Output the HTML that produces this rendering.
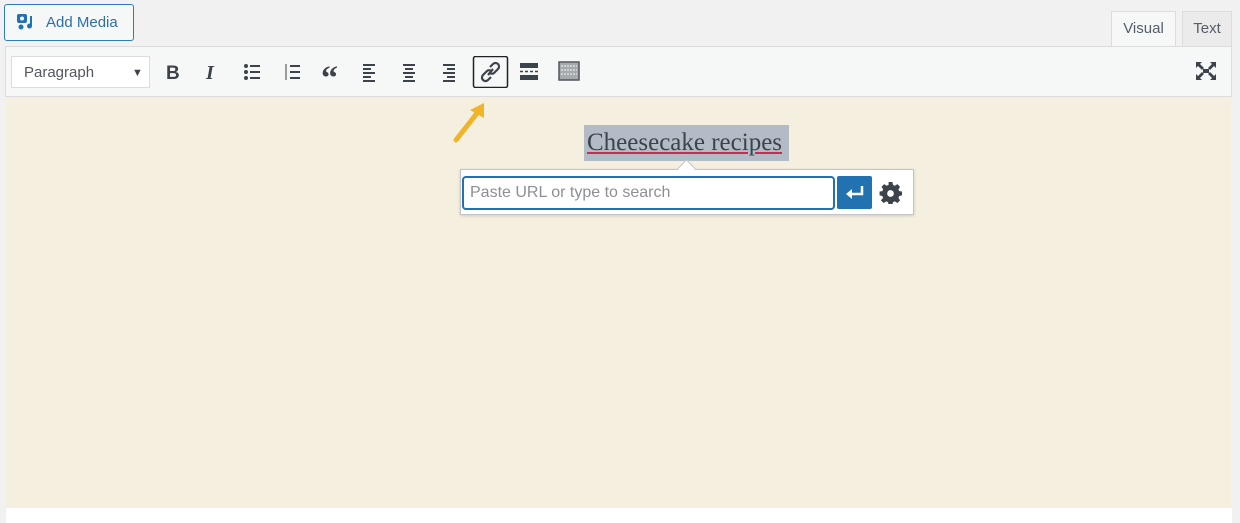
<!DOCTYPE html>
<html><head><meta charset="utf-8"><style>
body{margin:0;width:1240px;height:523px;background:#f1f1f1;font-family:"Liberation Sans",sans-serif;position:relative;overflow:hidden}
.abs{position:absolute}
.btn{left:4px;top:4px;width:130px;height:37px;border:1px solid #2e7bc0;border-radius:3px;background:#f6f7f7;box-sizing:border-box;color:#2e6fa8;font-size:15px}
.tab{top:11px;height:36px;border:1px solid #dcdcde;border-bottom:none;box-sizing:border-box;font-size:15px;color:#555d66;text-align:center;line-height:34px}
.tb{left:5px;top:46px;width:1227px;height:51px;background:#f6f7f7;border:1px solid #dcdcde;box-sizing:border-box}
</style></head><body>
<div class="abs btn"><svg class="abs" style="left:11px;top:8px" width="22" height="18" viewBox="0 0 22 18"><rect x="1" y="1" width="10" height="9" rx="2" fill="#2271b1"/><circle cx="6" cy="5.5" r="2" fill="#f6f7f7"/><path d="M13 3h3v10a2.5 2.5 0 1 1-2-2.4V3z" fill="#2271b1"/><circle cx="5" cy="14" r="2.5" fill="#2271b1"/></svg><span class="abs" style="left:41px;top:9px">Add Media</span></div>
<div class="abs tab" style="left:1111px;width:65px;background:#f6f7f7;height:37px">Visual</div>
<div class="abs tab" style="left:1182px;width:50px;background:#ebebeb">Text</div>
<div class="abs tb"></div>
<div class="abs" style="left:11px;top:56px;width:139px;height:32px;background:#fff;border:1px solid #dcdcde;box-sizing:border-box;font-size:15px;color:#50575e;line-height:31px;padding-left:12px">Paragraph<span class="abs" style="left:120px;top:1px;font-size:11px;color:#3c434a">▼</span></div>
<svg class="abs" style="left:160px;top:56px" width="440" height="32" viewBox="0 0 440 32" fill="#3c434a" stroke="#3c434a">
<text x="6" y="23" font-size="19" font-weight="bold" stroke="none" font-family="Liberation Sans">B</text>
<text x="46" y="23" font-size="20" font-style="italic" font-weight="bold" stroke="none" font-family="Liberation Serif">I</text>
<g stroke-width="2"><path d="M90 10h10M90 16h10M90 22h10"/><circle cx="86" cy="10" r="1"/><circle cx="86" cy="16" r="1"/><circle cx="86" cy="22" r="1"/>
<path d="M130 10h10M130 16h10M130 22h10" /><path d="M126 8v16" stroke-width="1"/></g>
<text x="161" y="33" font-size="34" font-weight="bold" stroke="none" font-family="Liberation Serif">“</text>
<g stroke-width="2"><path d="M203 9h12M203 13h8M203 17h12M203 21h8M203 25h12"/>
<path d="M243 9h12M245 13h8M243 17h12M245 21h8M243 25h12"/>
<path d="M283 9h12M287 13h8M283 17h12M287 21h8M283 25h12"/></g>
<rect x="313.5" y="0.5" width="34" height="31" rx="2" fill="none" stroke="#1d2327" stroke-width="1.5"/>
<g fill="none" stroke-width="2.2"><path d="M330 11l3-3a3 3 0 0 1 5 5l-4 4a3 3 0 0 1-4 0"/><path d="M331 21l-3 3a3 3 0 0 1-5-5l4-4a3 3 0 0 1 4 0"/><path d="M328 19l5-6"/></g>
<rect x="360" y="7" width="18" height="5" stroke="none"/><rect x="360" y="19" width="18" height="5" stroke="none"/><path d="M360 15.5h3M365 15.5h3M370 15.5h3M375 15.5h3" stroke-width="1.5"/>
<rect x="399" y="6" width="20" height="18" fill="#a7aaad" stroke="#50575e" stroke-width="1.5"/><path d="M401 10h16M401 14h16M401 18h16" stroke="#f6f7f7" stroke-dasharray="2 1"/>
</svg>
<svg class="abs" style="left:1195px;top:61px" width="22" height="20" viewBox="0 0 22 20" fill="#3c434a"><path d="M1 1h6l-2 2 4 4-2 2-4-4-2 2zM21 1h-6l2 2-4 4 2 2 4-4 2 2zM1 19h6l-2-2 4-4-2-2-4 4-2-2zM21 19h-6l2-2-4-4 2-2 4 4 2-2z"/><rect x="8" y="8" width="6" height="4"/></svg>
<div class="abs" style="left:6px;top:97px;width:1225px;height:411px;background:#f5efe0"></div>
<div class="abs" style="left:6px;top:508px;width:1226px;height:15px;background:#fff"></div>
<svg class="abs" style="left:450px;top:100px" width="40" height="44" viewBox="0 0 40 44"><path d="M6 40L28 12" stroke="#f0b429" stroke-width="5" stroke-linecap="round"/><path d="M34 3L20 10l14 8z" fill="#f0b429"/></svg>
<div class="abs" style="left:584px;top:125px;width:205px;height:36px;background:#b3bcc6"></div>
<div class="abs" style="left:587px;top:129px;font-family:'Liberation Serif',serif;font-size:25px;color:#3c434a;text-decoration:underline;text-decoration-color:#c03050">Cheesecake recipes</div>
<div class="abs" style="left:460px;top:169px;width:454px;height:46px;background:#fff;border:1px solid #c3c4c7;box-sizing:border-box;box-shadow:0 1px 3px rgba(0,0,0,.15)"></div>
<div class="abs" style="left:680px;top:162px;width:12px;height:12px;background:#fff;border-left:1px solid #c3c4c7;border-top:1px solid #c3c4c7;transform:rotate(45deg)"></div>
<div class="abs" style="left:462px;top:176px;width:373px;height:34px;border:2px solid #2271b1;border-radius:4px;background:#fff;box-sizing:border-box;font-size:16px;color:#8c8f94;line-height:30px;padding-left:6px">Paste URL or type to search</div>
<div class="abs" style="left:837px;top:176px;width:35px;height:33px;background:#2271b1;border-radius:2px"><svg width="35" height="33"><path d="M25 10v8H11" stroke="#fff" stroke-width="2.5" fill="none"/><path d="M9 18l6-5v10z" fill="#fff"/></svg></div>
<svg class="abs" style="left:879px;top:181px" width="23" height="23" viewBox="0 0 24 24"><path fill="#3c434a" d="M10 1h4l.6 3 2 1 2.6-1.7 2.8 2.8L20.3 8.6l.8 2 2.9.4v4l-2.9.6-.8 2 1.7 2.6-2.8 2.8-2.6-1.7-2 .8-.6 2.9h-4l-.6-2.9-2-.8-2.6 1.7-2.8-2.8L4.3 17.6l-.8-2L.6 15v-4l2.9-.4.8-2L2.6 6.1l2.8-2.8L8 5l2-1z"/><circle cx="12" cy="13" r="3.5" fill="#fff"/></svg>
</body></html>
